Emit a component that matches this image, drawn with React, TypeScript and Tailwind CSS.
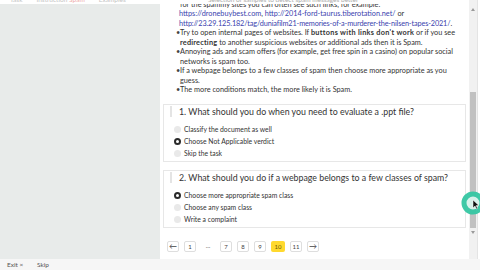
import React from "react";

const LINK = "text-[#3a3fae]";

function Bullet({ children }: { children: React.ReactNode }) {
  return (
    <div className="flex">
      <span className="w-[4px] shrink-0 text-[#444]">•</span>
      <div className="flex flex-col">{children}</div>
    </div>
  );
}

function Radio({ on }: { on?: boolean }) {
  return on ? (
    <span className="w-[7px] h-[7px] rounded-full border-[2px] border-[#2b2b2b] bg-white shrink-0" />
  ) : (
    <span className="w-[7px] h-[7px] rounded-full bg-[#e9e9e9] shrink-0" />
  );
}

function Option({ on, label }: { on?: boolean; label: string }) {
  return (
    <div className="h-[12px] flex items-center gap-[3px] pl-[10px] text-[6.8px] text-[#333] whitespace-nowrap">
      <Radio on={on} />
      <span>{label}</span>
    </div>
  );
}

function Card({ title, options, sel, pb }: { title: string; options: string[]; sel: number; pb: string }) {
  return (
    <div className={`mx-[3px] border border-[#e7e7e7] bg-white ${pb}`}>
      <div className="h-[14px] flex items-center pl-[6px]">
        <span className="w-[2px] h-[11px] bg-[#e4e4e4] mr-[7px]" />
        <span className="text-[8.8px] text-[#333] whitespace-nowrap">{title}</span>
      </div>
      <div className="mt-[5px] flex flex-col">
        {options.map((o, i) => (
          <Option key={o} label={o} on={i === sel} />
        ))}
      </div>
    </div>
  );
}

function PageBtn({ children, active, plain, w = "w-[12px]" }: { children: React.ReactNode; active?: boolean; plain?: boolean; w?: string }) {
  return (
    <span
      className={`h-[11px] ${w} shrink-0 flex items-center justify-center rounded-[2px] text-[6px] ${
        active
          ? "bg-[#ffd92e] text-[#6b5a00]"
          : plain
          ? "text-[#888]"
          : "border border-[#dedede] bg-white text-[#444]"
      }`}
    >
      {children}
    </span>
  );
}

export default function App() {
  return (
    <div className="w-[480px] h-[270px] overflow-hidden flex flex-col bg-white relative font-['Lato','Liberation_Sans',sans-serif]">
      <div className="flex h-[259px]">
        <div className="w-[469px] flex flex-col">
          {/* header strip (scrolled, mostly hidden) */}
          <div className="h-[4px] bg-white overflow-hidden flex shrink-0">
            <div className="w-[160px] pl-[10px] h-[4px] overflow-hidden flex items-end">
              <div className="text-[6.5px] leading-[8px] text-[#c4c4c4] whitespace-nowrap flex gap-[14px]">
                <span>Task</span>
                <span>
                  Instruction <span className="text-[#eaa]">Spam</span>
                </span>
                <span>Examples</span>
              </div>
            </div>
            <div className="pl-[48px] h-[4px] overflow-hidden flex items-end">
              <div className="text-[6.5px] leading-[8px] text-[#aaa] whitespace-nowrap">
                Selection of samples to detect spam messages better
              </div>
            </div>
          </div>

          <div className="flex flex-1 min-h-0">
            {/* left gray panel */}
            <div className="w-[160px] bg-[#e8ebea]" />

            {/* main content */}
            <div className="w-[309px] bg-white overflow-hidden flex flex-col">
              <div className="pl-[16px] text-[7.3px] leading-[9.5px] text-[#333] whitespace-nowrap">
                <div className="h-[5px] overflow-hidden flex items-end pl-[4px]">
                  <span className="block leading-[9.5px]">for the spammy sites you can often see such links, for example:</span>
                </div>
                <div className="pl-[3px]">
                  <span className={LINK}>https://dronebuybest.com</span>,{" "}
                  <span className={LINK}>http://2014-ford-taurus.tiberotation.net/</span> or
                </div>
                <div className="pl-[3px] tracking-[-0.12px]">
                  <span className={LINK}>http://23.29.125.182/tag/duniafilm21-memories-of-a-murderer-the-nilsen-tapes-2021/</span>.
                </div>
                <Bullet>
                  <span>
                    Try to open internal pages of websites. If <b className="tracking-[0.3px]">buttons with links don't work</b> or if you see
                  </span>
                  <span>
                    <b className="tracking-[0.2px]">redirecting</b> to another suspicious websites or additional ads then it is Spam.
                  </span>
                </Bullet>
                <Bullet>
                  <span>Annoying ads and scam offers (for example, get free spin in a casino) on popular social</span>
                  <span>networks is spam too.</span>
                </Bullet>
                <Bullet>
                  <span>If a webpage belongs to a few classes of spam then choose more appropriate as you</span>
                  <span>guess.</span>
                </Bullet>
                <Bullet>
                  <span>The more conditions match, the more likely it is Spam.</span>
                </Bullet>
              </div>

              <div className="mt-[9px]">
                <Card
                  title="1. What should you do when you need to evaluate a .ppt file?"
                  options={["Classify the document as well", "Choose Not Applicable verdict", "Skip the task"]}
                  sel={1}
                  pb="pb-[1px]"
                />
              </div>
              <div className="mt-[8px]">
                <Card
                  title="2. What should you do if a webpage belongs to a few classes of spam?"
                  options={["Choose more appropriate spam class", "Choose any spam class", "Write a complaint"]}
                  sel={0}
                  pb="pb-[1px]"
                />
              </div>

              <div className="mt-[13px] pl-[7px] flex items-center gap-[5px]">
                <PageBtn>
                  <span className="text-[8px] leading-none">←</span>
                </PageBtn>
                <PageBtn>1</PageBtn>
                <PageBtn plain w="w-[14px]">···</PageBtn>
                <PageBtn>7</PageBtn>
                <PageBtn>8</PageBtn>
                <PageBtn>9</PageBtn>
                <PageBtn active w="w-[14px]">10</PageBtn>
                <PageBtn>11</PageBtn>
                <PageBtn>
                  <span className="text-[8px] leading-none">→</span>
                </PageBtn>
              </div>
            </div>
          </div>
        </div>

        {/* scrollbar */}
        <div className="w-[8px] bg-[#f1f1f1] flex flex-col items-center">
          <div className="h-[92px] flex flex-col items-center pt-[8px]">
            <span className="w-0 h-0 border-l-[2px] border-r-[2px] border-b-[3px] border-l-transparent border-r-transparent border-b-[#9a9a9a]" />
          </div>
          <div className="w-[6px] h-[136px] bg-[#c1c1c1]" />
          <span className="mt-[3px] w-0 h-0 border-l-[2px] border-r-[2px] border-t-[3px] border-l-transparent border-r-transparent border-t-[#9a9a9a]" />
        </div>
        <div className="w-[3px] bg-white border-l border-[#e4e4e4]" />
      </div>

      {/* bottom bar */}
      <div className="h-[11px] bg-[#f6f6f6] flex items-center text-[6.5px] text-[#555]">
        <span className="pl-[7px] w-[33px]">Exit ×</span>
        <span className="pl-[4px]">Skip</span>
      </div>

      {/* cursor highlight */}
      <svg className="absolute left-[461px] top-[191px]" width="24" height="24" viewBox="0 0 24 24">
        <circle cx="12" cy="12" r="9" fill="#d8f3ec" stroke="#35c7a3" strokeWidth="5" opacity="0.95" />
        <path d="M12 9 L12 17 L14 15 L15.5 18 L16.6 17.5 L15.2 14.6 L17.8 14.4 Z" fill="#111" stroke="#fff" strokeWidth="0.5" />
      </svg>
    </div>
  );
}
